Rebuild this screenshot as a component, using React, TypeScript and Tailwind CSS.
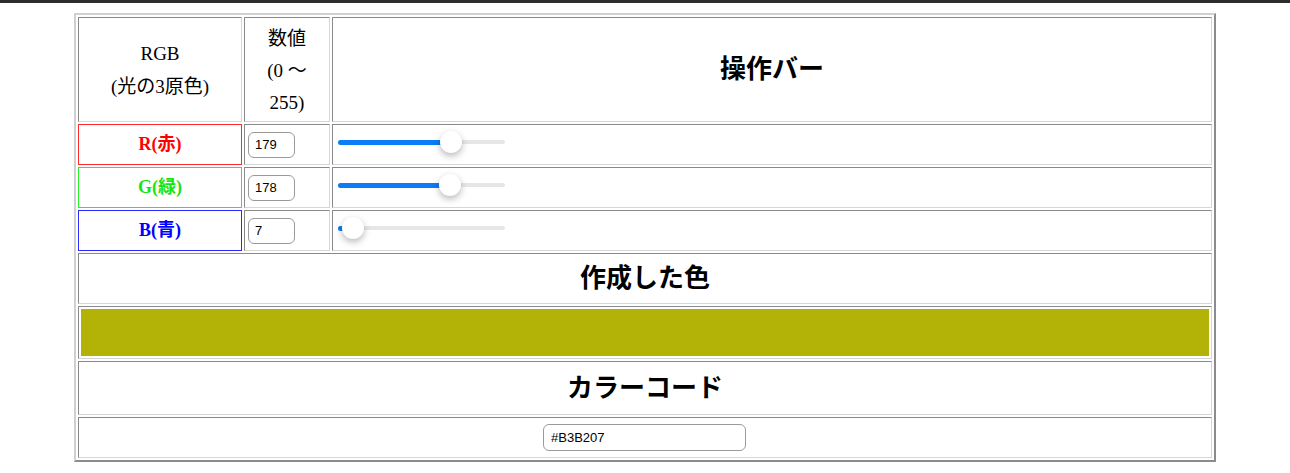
import React, { useState } from 'react';

const serif = 'font-["Liberation_Serif","Noto_Sans_CJK_JP",serif]';
const sans = 'font-["Liberation_Sans","Noto_Sans_CJK_JP",sans-serif]';

// border="1" look: cells sunk in, table raised
const cell = 'border border-t-[#8a8a8a] border-l-[#8a8a8a] border-b-[#d6d6d6] border-r-[#d6d6d6] p-0';

const Slider = ({ value }: { value: number }) => {
  const pos = 11 + (value / 255) * 145;
  return (
    <div className="relative ml-[5px] mb-[3px] h-[24px] w-[167px]">
      <div className="absolute left-0 right-0 top-[9px] h-[4px] rounded-full bg-[#e6e6e9]" />
      <div className="absolute left-0 top-[9px] h-[5px] rounded-full bg-[#0a7cf6]" style={{ width: pos }} />
      <div
        className="absolute top-0 h-[22px] w-[22px] rounded-full bg-white shadow-[0_3px_7px_rgba(0,0,0,0.28)]"
        style={{ left: pos - 11 }}
      />
    </div>
  );
};

const App = () => {
  const [rgb] = useState({ r: 179, g: 178, b: 7 });
  const hex = '#' + [rgb.r, rgb.g, rgb.b].map((v) => v.toString(16).padStart(2, '0')).join('').toUpperCase();

  const rows = [
    { label: 'R(赤)', value: rgb.r, text: 'text-[#ff0000]', border: 'border-[#ff2a2a]' },
    { label: 'G(緑)', value: rgb.g, text: 'text-[#14e414]', border: 'border-[#2cf02c]' },
    { label: 'B(青)', value: rgb.b, text: 'text-[#0000ff]', border: 'border-[#2a2aff]' },
  ];

  return (
    <div className="min-h-screen bg-white">
      <div className="h-[3px] bg-[#2c2c2c]" />
      <div className="pt-[10px]">
        <table
          className={`${serif} mx-auto w-[1142px] table-fixed border-separate border-spacing-[2px] border-2 border-t-[#d0d0d0] border-l-[#d0d0d0] border-r-[#8c8c8c] border-b-[#8c8c8c] text-black`}
        >
          <colgroup>
            <col className="w-[164px]" />
            <col className="w-[86px]" />
            <col />
          </colgroup>
          <tbody>
            {/* Header */}
            <tr className="h-[105px]">
              <td className={`${cell} text-center text-[19px] leading-[33px]`}>
                RGB
                <br />
                (光の3原色)
              </td>
              <td className={`${cell} pt-[2px] text-center text-[19px] leading-[32px]`}>
                数値
                <br />
                (0 ～
                <br />
                255)
              </td>
              <td className={`${cell} text-center text-[26px] font-bold`}>操作バー</td>
            </tr>

            {/* Sliders */}
            {rows.map((row) => (
              <tr key={row.label} className="h-[41px]">
                <td className={`border ${row.border} p-0 text-center text-[18px] font-bold ${row.text}`}>{row.label}</td>
                <td className={`${cell} pl-[3px]`}>
                  <div
                    className={`${sans} flex h-[26px] w-[47px] items-center rounded-[6px] border border-[#9a9a9a] pl-[6px] text-[13px] text-black`}
                  >
                    {row.value}
                  </div>
                </td>
                <td className={cell}>
                  <Slider value={row.value} />
                </td>
              </tr>
            ))}

            <tr className="h-[51px]">
              <td colSpan={3} className={`${cell} text-center text-[26px] font-bold`}>
                作成した色
              </td>
            </tr>
            <tr className="h-[53px]">
              <td colSpan={3} className={`${cell} p-[2px]`}>
                <div className="h-[47px] w-full" style={{ backgroundColor: hex }} />
              </td>
            </tr>
            <tr className="h-[54px]">
              <td colSpan={3} className={`${cell} text-center text-[26px] font-bold`}>
                カラーコード
              </td>
            </tr>
            <tr className="h-[41px]">
              <td colSpan={3} className={cell}>
                <div className="flex justify-center">
                  <div
                    className={`${sans} ml-[-1px] flex h-[27px] w-[203px] items-center rounded-[6px] border border-[#9a9a9a] pl-[7px] text-[13px] text-black`}
                  >
                    {hex}
                  </div>
                </div>
              </td>
            </tr>
          </tbody>
        </table>
      </div>
    </div>
  );
};

export default App;
